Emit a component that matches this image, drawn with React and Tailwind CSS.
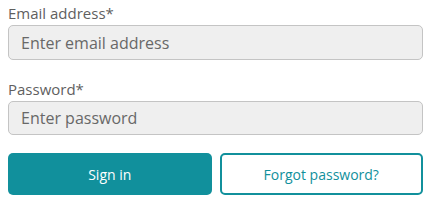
export default function App() {
  return (
    <div
      className="w-[428px] h-[203px] bg-white pl-2 pr-[5px]"
      style={{ fontFamily: "'Open Sans', sans-serif" }}
    >
      <form className="flex flex-col" onSubmit={(e) => e.preventDefault()}>
        <label className="pt-[3px] text-[15px] leading-[20px] text-[#5f5f5f]">
          Email address*
        </label>
        <input
          type="email"
          placeholder="Enter email address"
          className="mt-[2px] h-[35px] w-full rounded-[5px] border border-[#c4c4c4] bg-[#efefef] px-3 text-[16px] text-[#333] placeholder:text-[#686868] outline-none"
        />

        <label className="mt-[19px] text-[15px] leading-[20px] text-[#5f5f5f]">
          Password*
        </label>
        <input
          type="password"
          placeholder="Enter password"
          className="mt-[2px] h-[34px] w-full rounded-[5px] border border-[#c4c4c4] bg-[#efefef] px-3 text-[16px] text-[#333] placeholder:text-[#686868] outline-none"
        />

        <div className="mt-[18px] grid grid-cols-2 gap-2">
          <button
            type="submit"
            className="h-[42px] rounded-[5px] bg-[#11909c] text-[14px] text-white"
          >
            Sign in
          </button>
          <button
            type="button"
            className="h-[42px] rounded-[5px] border-2 border-[#11909c] bg-white text-[14px] text-[#11909c]"
          >
            Forgot password?
          </button>
        </div>
      </form>
    </div>
  );
}
